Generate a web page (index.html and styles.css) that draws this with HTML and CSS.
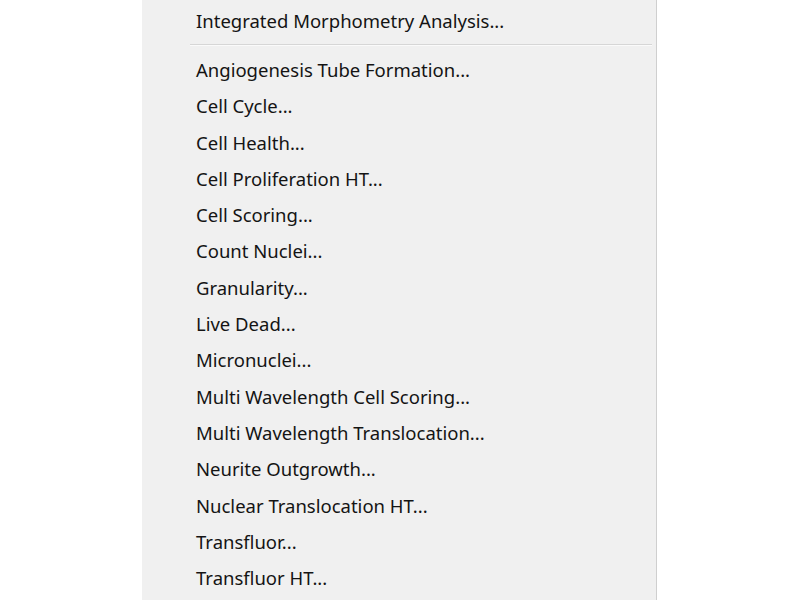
FILE: index.html
```html
<!DOCTYPE html>
<html lang="en">
<head>
    <meta charset="UTF-8">
    <title>Analysis menu</title>
    <link rel="stylesheet" href="styles.css">
</head>
<body>
    <div class="menu">
        <ul class="menu-list">
            <li class="menu-item">Integrated Morphometry Analysis...</li>
        </ul>
        <div class="menu-separator"></div>
        <ul class="menu-list">
            <li class="menu-item">Angiogenesis Tube Formation...</li>
            <li class="menu-item">Cell Cycle...</li>
            <li class="menu-item">Cell Health...</li>
            <li class="menu-item">Cell Proliferation HT...</li>
            <li class="menu-item">Cell Scoring...</li>
            <li class="menu-item">Count Nuclei...</li>
            <li class="menu-item">Granularity...</li>
            <li class="menu-item">Live Dead...</li>
            <li class="menu-item">Micronuclei...</li>
            <li class="menu-item">Multi Wavelength Cell Scoring...</li>
            <li class="menu-item">Multi Wavelength Translocation...</li>
            <li class="menu-item">Neurite Outgrowth...</li>
            <li class="menu-item">Nuclear Translocation HT...</li>
            <li class="menu-item">Transfluor...</li>
            <li class="menu-item">Transfluor HT...</li>
        </ul>
    </div>
</body>
</html>
```

FILE: styles.css
```css
body {
    margin: 0;
    background-color: #ffffff;
    font-family: 'Noto Sans', sans-serif;
}

.menu {
    margin-left: 142px;
    width: 515px;
    height: 600px;
    padding-top: 2px;
    background-color: #f0f0f0;
    border-right: 1px solid #cfcfcf;
    box-sizing: border-box;
}

.menu-list {
    list-style: none;
    margin: 0;
    padding: 0;
}

.menu-item {
    height: 36.3px;
    display: flex;
    align-items: center;
    padding-left: 54px;
    font-size: 18.5px;
    color: #141414;
}

.menu-separator {
    height: 1px;
    margin: 6px 4px 5px 48px;
    background-color: #d6d6d6;
    border-bottom: 1px solid #fafafa;
}
```
